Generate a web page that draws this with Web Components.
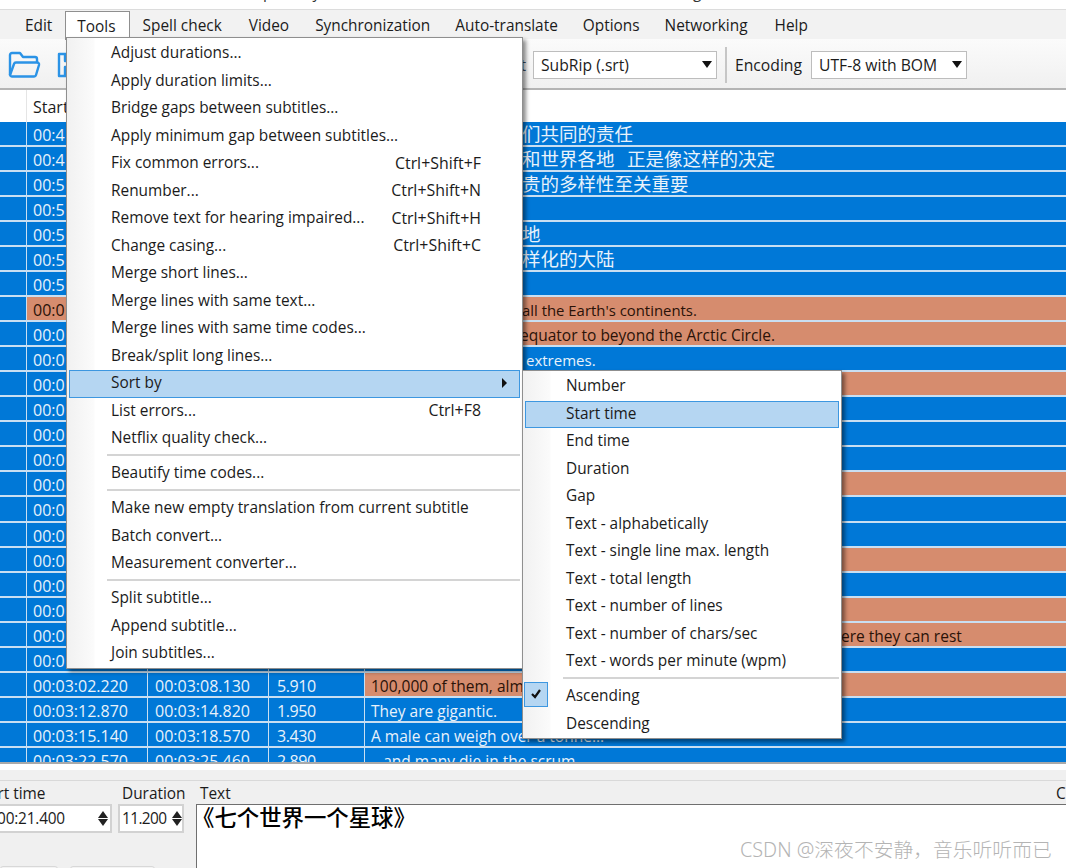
<!DOCTYPE html>
<html>
<head>
<meta charset="utf-8">
<style>
html, body { margin: 0; height: 100%; overflow: hidden; background: #fff; }
body { font-family: "Open Sans", "Noto Sans CJK SC", sans-serif; font-size: 15.4px; color: #1b1b1b; }
</style>
</head>
<body>
<app-window></app-window>
<script>
const CJK = '"Noto Sans CJK SC", sans-serif';

class TitleStrip extends HTMLElement {
	constructor () {
		super();
		this.attachShadow({ mode: 'open' }).innerHTML = `
		<style>
			:host { display: block; position: relative; height: 9px; overflow: hidden; background: #fff; }
			div { display: flex; margin-top: -17px; line-height: 20px; color: #333; }
		</style>
		<div><span style="margin-left:263px">p</span><span style="margin-left:40px">y</span><span style="margin-left:351px">_</span><span style="margin-left:15px">g</span></div>`;
	}
}

class MenuBar extends HTMLElement {
	constructor () {
		super();
		const root = this.attachShadow({ mode: 'open' });
		root.innerHTML = `
		<style>
			:host { display: flex; height: 30px; background: #f2f2f2; border-top: 1px solid #dcdcdc; box-sizing: border-box; padding-left: 12.5px; align-items: center; }
			span { padding: 0 12.5px; line-height: 32px; height: 30px; white-space: nowrap; }
			.open { background: #fff; border: 1px solid #8f8f8f; border-bottom: 0; line-height: 29px; padding: 0 13.5px 0 11.5px; height: 28px; margin-top: 2px; }
			.wide { padding-right: 14.5px; }
			.sync { padding-left: 11.5px; }
		</style>
		<span>Edit</span><span class="open">Tools</span><span class="wide">Spell check</span><span class="wide">Video</span><span class="sync">Synchronization</span><span>Auto-translate</span><span>Options</span><span class="wide">Networking</span><span>Help</span>`;
	}
}

class ComboBox extends HTMLElement {
	constructor () {
		super();
		const root = this.attachShadow({ mode: 'open' });
		root.innerHTML = `
		<style>
			:host { display: flex; align-items: center; justify-content: space-between; box-sizing: border-box; height: 28px; background: #fff; border: 1px solid #bdbdbd; padding: 0 4px 0 7px; font-size: 15.7px; }
			i { width: 0; height: 0; border: 5px solid transparent; border-top: 7px solid #111; border-bottom: 0; }
		</style>
		<slot></slot><i></i>`;
	}
}

class ToolBar extends HTMLElement {
	constructor () {
		super();
		const root = this.attachShadow({ mode: 'open' });
		root.innerHTML = `
		<style>
			:host { display: flex; align-items: center; box-sizing: border-box; height: 51px; padding: 2px 0 0 8px; background: linear-gradient(#fbfbfb, #f0f0f0); border-bottom: 2px solid #b4b4b4; font-size: 15.7px; }
			.icons { display: flex; align-items: center; gap: 16px; width: 525px; box-sizing: border-box; padding-right: 7px; }
			.icons span { margin-left: auto; color: #3a4a5a; }
			.sep { width: 2px; height: 36px; background: #c6c6c6; margin: 0 8px 0 8px; }
			.label { margin-right: 9px; }
			combo-box.format { width: 184px; }
			combo-box.encoding { width: 156px; }
		</style>
		<div class="icons">
			<svg width="33" height="29" viewBox="0 0 33 29" fill="none" stroke="#2b93e6" stroke-width="2.4" stroke-linejoin="round"><path d="M2 25V5a2 2 0 0 1 2-2h8l3 4h12a2 2 0 0 1 2 2v3"/><path d="M2 25l4-11a2 2 0 0 1 2-1.500h21a2 2 0 0 1 2 2.500l-3 10a2 2 0 0 1-2 1.500H4a2 2 0 0 1-2-1.500z"/></svg>
			<svg width="30" height="28" viewBox="0 0 30 28" fill="none" stroke="#2b93e6" stroke-width="2.4" stroke-linejoin="round"><path d="M2 3h21l5 5v17H2z"/><path d="M8 3v7h12V3M8 25v-9h14v9"/></svg>
			<span>t</span>
		</div>
		<combo-box class="format">SubRip (.srt)</combo-box>
		<div class="sep"></div>
		<span class="label">Encoding</span>
		<combo-box class="encoding">UTF-8 with BOM</combo-box>`;
	}
}

class SubtitleRow extends HTMLElement {
	constructor () {
		super();
		const root = this.attachShadow({ mode: 'open' });
		root.innerHTML = `
		<style>
			:host { display: grid; grid-template-columns: 27px 121px 121px 96px 1fr; height: 25.04px; box-sizing: border-box; color: #e8f2fb; overflow: hidden; font-size: 16px; }
			div { background: #0078d7; border-right: 1px solid #c9dff2; border-bottom: 2px solid #c9dff2; box-sizing: border-box; padding-left: 6px; line-height: 27px; white-space: pre; overflow: hidden; }
			div:last-child { border-right: 0; font-size: 15.500px; padding-left: 6px; }
			.end { padding-left: 7px; }
			.dur { letter-spacing: -.4px; padding-left: 8px; }
			.warn { background: #d68c6e; color: #2a1208; }
		</style>
		<div></div><div class="start"></div><div class="end"></div><div class="dur"></div><div class="text"></div>`;
	}
	connectedCallback () {
		const $cells = this.shadowRoot.querySelectorAll('div');
		$cells[1].textContent = this.getAttribute('start') || '';
		$cells[2].textContent = this.getAttribute('end') || '';
		$cells[3].textContent = this.getAttribute('dur') || '';
		$cells[4].textContent = this.getAttribute('text') || '';
		if (this.hasAttribute('warn')) $cells[4].classList.add('warn');
		if (this.hasAttribute('warn-start')) $cells[1].classList.add('warn');
		// 文字被菜单挡住的部分不写，用缩进对齐
		if (this.hasAttribute('indent')) $cells[4].style.paddingLeft = this.getAttribute('indent') + 'px';
		if (this.hasAttribute('size')) $cells[4].style.fontSize = this.getAttribute('size') + 'px';
		if (this.hasAttribute('cjk')) { $cells[4].style.fontFamily = CJK; $cells[4].style.fontSize = '18.5px'; $cells[4].style.lineHeight = '23px'; }
	}
}

class SubtitleGrid extends HTMLElement {
	constructor () {
		super();
		const root = this.attachShadow({ mode: 'open' });
		root.innerHTML = `
		<style>
			:host { display: block; height: 672px; overflow: hidden; border-bottom: 2px solid #a9a9a9; box-sizing: content-box; }
			.head { display: grid; grid-template-columns: 27px 1fr; height: 32px; background: #fff; font-size: 16px; }
			.head div { padding-left: 6px; line-height: 35px; }
			.head div:first-child { border-right: 1px solid #e5e5e5; }
		</style>
		<div class="head"><div></div><div>Start</div></div>
		<slot></slot>`;
	}
}

class MenuItem extends HTMLElement {
	constructor () {
		super();
		const root = this.attachShadow({ mode: 'open' });
		root.innerHTML = `
		<style>
			:host { display: flex; justify-content: space-between; align-items: center; box-sizing: border-box; height: 27.5px; padding: 0 38px 2px 41px; white-space: nowrap; border: 1px solid transparent; }
			:host([active]) { background: #b5d6f2; border-color: #3d97e0; }
			:host([arrow]) { padding-right: 12px; }
			:host([sub]) { padding-left: 40px; }
			.arrow { display: none; width: 0; height: 0; border: 5px solid transparent; border-left: 5px solid #111; border-right: 0; }
			:host([arrow]) .arrow { display: block; }
			.key { font-size: 15.900px; }
		</style>
		<span><slot></slot></span><span class="key"><slot name="key"></slot></span><i class="arrow"></i>`;
	}
}

class MenuSep extends HTMLElement {
	constructor () {
		super();
		this.attachShadow({ mode: 'open' }).innerHTML = `
		<style>
			:host { display: block; height: 7.500px; box-sizing: border-box; padding: 1px 0 0 38px; }
			div { height: 2px; background: #d4d4d4; }
		</style><div></div>`;
	}
}

class PopupMenu extends HTMLElement {
	constructor () {
		super();
		this.attachShadow({ mode: 'open' }).innerHTML = `
		<style>
			:host { display: block; position: absolute; box-sizing: border-box; padding: 2px 2px 0; background: linear-gradient(90deg, #f1f1f1, #fbfbfb 27px, #fff 28px); border: 1px solid #8f8f8f; box-shadow: 3px 3px 4px rgba(0,0,0,.45); }
		</style><slot></slot>`;
	}
}

class EditPanel extends HTMLElement {
	constructor () {
		super();
		this.attachShadow({ mode: 'open' }).innerHTML = `
		<style>
			:host { display: block; position: relative; height: 104px; background: #f0f0f0; overflow: hidden; }
			.strip { height: 6px; background: #fff; }
			.line { height: 11px; border-bottom: 1px solid #d9d9d9; box-sizing: border-box; }
			.row { display: flex; height: 87px; }
			.left { display: flex; flex-direction: column; width: 185px; flex: none; }
			.fields { display: flex; }
			.col { display: flex; flex-direction: column; }
			label { height: 23px; line-height: 26px; white-space: nowrap; font-size: 15.400px; }
			.start { width: 112px; overflow: hidden; }
			.start label { margin-left: -25px; }
			.dur { width: 66px; margin-left: 6px; }
			.dur label { margin-left: 4px; }
			.box { display: flex; align-items: center; justify-content: space-between; height: 29px; box-sizing: border-box; background: #fff; border: 2px solid #d2d2d2; letter-spacing: -.2px; }
			.dur .box { letter-spacing: -.6px; }
			.start .box { border-left: 0; padding-right: 2px; }
			.spin { display: flex; flex-direction: column; gap: 1px; flex: none; }
			.spin i { display: block; width: 0; height: 0; border: 5.500px solid transparent; }
			.spin i:first-child { border-bottom: 7px solid #222; border-top: 0; }
			.spin i:last-child { border-top: 7px solid #222; border-bottom: 0; }
			.btns { display: flex; gap: 12px; margin-top: 33px; }
			.btns div { height: 10px; box-sizing: border-box; border: 1px solid #d8d8d8; border-radius: 3px; background: #f4f4f4; }
			.text { flex: 1; margin-left: 11px; }
			.text label { display: flex; justify-content: space-between; padding-left: 4px; overflow: hidden; }
			.area { flex: 1; background: #fff; border: 1px solid #6f6f6f; border-width: 1px 0 0 1px; font-family: "Noto Sans CJK SC", sans-serif; font-size: 22.400px; font-weight: 500; color: #000; text-indent: -5px; line-height: 22px; overflow: hidden; }
		</style>
		<div class="strip"></div><div class="line"></div>
		<div class="row">
			<div class="left">
				<div class="fields">
					<div class="col start"><label>Start time</label>
						<div class="box"><span style="margin-left:-24px">00:00:21.400</span><span class="spin"><i></i><i></i></span></div></div>
					<div class="col dur"><label>Duration</label>
						<div class="box"><span style="margin-left:2px">11.200</span><span class="spin"><i></i><i></i></span></div></div>
				</div>
				<div class="btns"><div style="width:58px"></div><div style="width:85px"></div></div>
			</div>
			<div class="col text"><label><span>Text</span><span style="width:10px">C</span></label>
				<div class="area">《七个世界一个星球》</div></div>
		</div>`;
	}
}

// [start, end, dur, text, flags]
const ROWS = [
	{ start: '00:4', text: '们共同的责任', cjk: 1, indent: 157 },
	{ start: '00:4', text: '和世界各地   正是像这样的决定', cjk: 1, indent: 157 },
	{ start: '00:5', text: '贵的多样性至关重要', cjk: 1, indent: 157 },
	{ start: '00:5' },
	{ start: '00:5', text: '地', cjk: 1, indent: 157 },
	{ start: '00:5', text: '样化的大陆', cjk: 1, indent: 157 },
	{ start: '00:5' },
	{ start: '00:0', warn: 1, wstart: 1, text: "all the Earth's continents.", indent: 157, size: 14.9 },
	{ start: '00:0', warn: 1, text: 'equator to beyond the Arctic Circle.', indent: 155 },
	{ start: '00:0', text: 'extremes.', indent: 161, size: 15 },
	{ start: '00:0', warn: 1 }, { start: '00:0' }, { start: '00:0' }, { start: '00:0' },
	{ start: '00:0', warn: 1 }, { start: '00:0' }, { start: '00:0' },
	{ start: '00:0', warn: 1 }, { start: '00:0' }, { start: '00:0', warn: 1 },
	{ start: '00:0', warn: 1, text: 'ere they can rest', indent: 476 },
	{ start: '00:0' },
	{ start: '00:03:02.220', end: '00:03:08.130', dur: '5.910', warn: 1, text: '100,000 of them, almost' },
	{ start: '00:03:12.870', end: '00:03:14.820', dur: '1.950', text: 'They are gigantic.' },
	{ start: '00:03:15.140', end: '00:03:18.570', dur: '3.430', text: 'A male can weigh over a tonne...' },
	{ start: '00:03:22.570', end: '00:03:25.460', dur: '2.890', text: '...and many die in the scrum.' }
];

class AppWindow extends HTMLElement {
	constructor () {
		super();
		const root = this.attachShadow({ mode: 'open' });
		const rows = ROWS.map(r => {
			const $r = document.createElement('subtitle-row');
			if (r.start) $r.setAttribute('start', r.start);
			if (r.end) $r.setAttribute('end', r.end);
			if (r.dur) $r.setAttribute('dur', r.dur);
			if (r.text) $r.setAttribute('text', r.text);
			if (r.warn) $r.setAttribute('warn', '');
			if (r.wstart) $r.setAttribute('warn-start', '');
			if (r.indent) $r.setAttribute('indent', r.indent);
			if (r.size) $r.setAttribute('size', r.size);
			if (r.cjk) $r.setAttribute('cjk', '');
			return $r.outerHTML;
		}).join('');
		root.innerHTML = `
		<style>
			:host { display: block; position: relative; width: 1066px; height: 868px; overflow: hidden; }
			.tools { left: 66px; top: 37px; width: 457px; height: 632px; }
			.sort { left: 522px; top: 370px; width: 320px; height: 369px; }
			.mark { position: absolute; left: 1px; top: 311px; width: 24px; height: 25px; box-sizing: border-box; background: #b5d6f2; border: 1px solid #3d97e0; }
			.mark svg { display: block; margin: 6px 0 0 5px; }
			.wm { position: absolute; left: 740px; top: 834px; font-family: "Noto Sans", "Noto Sans CJK SC", sans-serif; font-size: 19.800px; font-weight: 300; color: #b4b4b4; white-space: nowrap; }
		</style>
		<title-strip></title-strip>
		<menu-bar></menu-bar>
		<tool-bar></tool-bar>
		<subtitle-grid>${rows}</subtitle-grid>
		<edit-panel></edit-panel>
		<popup-menu class="tools">
			<menu-item>Adjust durations...</menu-item>
			<menu-item>Apply duration limits...</menu-item>
			<menu-item>Bridge gaps between subtitles...</menu-item>
			<menu-item>Apply minimum gap between subtitles...</menu-item>
			<menu-item>Fix common errors...<span slot="key">Ctrl+Shift+F</span></menu-item>
			<menu-item>Renumber...<span slot="key">Ctrl+Shift+N</span></menu-item>
			<menu-item>Remove text for hearing impaired...<span slot="key">Ctrl+Shift+H</span></menu-item>
			<menu-item>Change casing...<span slot="key">Ctrl+Shift+C</span></menu-item>
			<menu-item>Merge short lines...</menu-item>
			<menu-item>Merge lines with same text...</menu-item>
			<menu-item>Merge lines with same time codes...</menu-item>
			<menu-item>Break/split long lines...</menu-item>
			<menu-item active arrow>Sort by</menu-item>
			<menu-item>List errors...<span slot="key">Ctrl+F8</span></menu-item>
			<menu-item>Netflix quality check...</menu-item>
			<menu-sep></menu-sep>
			<menu-item>Beautify time codes...</menu-item>
			<menu-sep></menu-sep>
			<menu-item>Make new empty translation from current subtitle</menu-item>
			<menu-item>Batch convert...</menu-item>
			<menu-item>Measurement converter...</menu-item>
			<menu-sep></menu-sep>
			<menu-item>Split subtitle...</menu-item>
			<menu-item>Append subtitle...</menu-item>
			<menu-item>Join subtitles...</menu-item>
		</popup-menu>
		<popup-menu class="sort">
			<menu-item sub>Number</menu-item>
			<menu-item sub active>Start time</menu-item>
			<menu-item sub>End time</menu-item>
			<menu-item sub>Duration</menu-item>
			<menu-item sub>Gap</menu-item>
			<menu-item sub>Text - alphabetically</menu-item>
			<menu-item sub>Text - single line max. length</menu-item>
			<menu-item sub>Text - total length</menu-item>
			<menu-item sub>Text - number of lines</menu-item>
			<menu-item sub>Text - number of chars/sec</menu-item>
			<menu-item sub>Text - words per minute (wpm)</menu-item>
			<menu-sep></menu-sep>
			<menu-item sub>Ascending</menu-item>
			<menu-item sub>Descending</menu-item>
			<div class="mark"><svg width="12" height="11" viewBox="0 0 12 11" fill="none" stroke="#111" stroke-width="2.200"><path d="M2 5l3 3 5-7"/></svg></div>
		</popup-menu>
		<div class="wm">CSDN @深夜不安静，音乐听听而已</div>`;
	}
}

customElements.define('title-strip', TitleStrip);
customElements.define('menu-bar', MenuBar);
customElements.define('combo-box', ComboBox);
customElements.define('tool-bar', ToolBar);
customElements.define('subtitle-row', SubtitleRow);
customElements.define('subtitle-grid', SubtitleGrid);
customElements.define('menu-item', MenuItem);
customElements.define('menu-sep', MenuSep);
customElements.define('popup-menu', PopupMenu);
customElements.define('edit-panel', EditPanel);
customElements.define('app-window', AppWindow);
</script>
</body>
</html>
